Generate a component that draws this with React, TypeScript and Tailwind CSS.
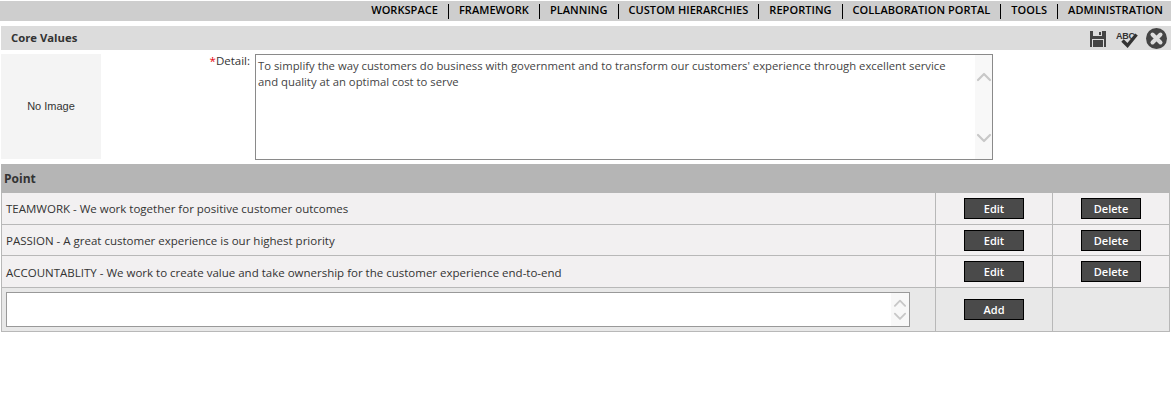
import React from 'react';
import { ChevronUp, ChevronDown } from 'lucide-react';

const font = "font-['Open_Sans','Liberation_Sans',sans-serif]";
const navItems = ['WORKSPACE', 'FRAMEWORK', 'PLANNING', 'CUSTOM HIERARCHIES', 'REPORTING', 'COLLABORATION PORTAL', 'TOOLS', 'ADMINISTRATION'];
const points = [
  { text: 'TEAMWORK - We work together for positive customer outcomes', h: 'h-[32px]', pt: '' },
  { text: 'PASSION - A great customer experience is our highest priority', h: 'h-[31px]', pt: 'pt-[2px]' },
  { text: 'ACCOUNTABLITY - We work to create value and take ownership for the customer experience end-to-end', h: 'h-[32px]', pt: 'pt-[2px]' },
];

const ActionButton = ({ label }: { label: string }) => (
  <button className="w-[60px] h-[21px] bg-[#4a4a4a] border border-black text-white text-[11px] font-semibold leading-none">
    {label}
  </button>
);

const Arrows = ({ gap, className }: { gap: string; className: string }) => (
  <div className={`flex flex-col items-center justify-center text-[#c8c8c8] ${className}`}>
    <ChevronUp size={24} strokeWidth={2.2} />
    <ChevronDown size={24} strokeWidth={2.2} className={gap} />
  </div>
);

export default function App() {
  return (
    <div className={`w-[1171px] h-[406px] bg-white pt-px text-[#333] overflow-hidden ${font}`}>
      <nav className="h-[20px] bg-[#cecece] flex items-center justify-end pr-[8px] text-black text-[11px] tracking-[0.05px] font-semibold">
        {navItems.map((item, i) => (
          <span key={item} className={`h-[15px] leading-[11px] px-[10px] last:pr-0 ${i > 0 ? 'border-l border-black' : ''}`}>
            {item}
          </span>
        ))}
      </nav>

      <div className="mt-[5px] ml-px h-[24px] bg-[#dcdcdc] flex items-center justify-between pl-[10px] pr-[4px]">
        <span className="text-[11.3px] font-bold text-[#333]">Core Values</span>
        <div className="flex items-center">
          <svg width="16" height="16" viewBox="0 0 16 16" className="mt-[2px]">
            <path d="M0 0h16v16H0z" fill="#444" />
            <path d="M3 0h9v5H3z" fill="#dcdcdc" />
            <path d="M9 1h2v3H9z" fill="#444" />
            <path d="M2 8h12v8H2z" fill="#dcdcdc" />
            <path d="M3 9h10v7H3z" fill="#444" />
          </svg>
          <svg width="22" height="17" viewBox="0 0 22 17" className="ml-[10px] mt-[2px]">
            <text x="0" y="7.5" fontSize="9" fontWeight="700" fill="#333" fontFamily="Liberation Sans" textLength="19">ABC</text>
            <path d="M6.5 9.5l5 5 9-11" fill="none" stroke="#333" strokeWidth="3.4" />
          </svg>
          <svg width="21" height="21" viewBox="0 0 21 21" className="ml-[8px]">
            <circle cx="10.5" cy="10.5" r="10.5" fill="#444" />
            <path d="M6.5 6.5l8 8M14.5 6.5l-8 8" stroke="#dcdcdc" strokeWidth="4" strokeLinecap="round" />
          </svg>
        </div>
      </div>

      <div className="mt-[4px] ml-px flex h-[105px]">
        <div className="w-[100px] bg-[#f4f4f4] flex items-center justify-center text-[11px] text-[#333] font-['Liberation_Sans',sans-serif]">
          No Image
        </div>
        <div className="w-[154px] text-right pr-[5px] text-[11.5px] leading-[14px]">
          <span className="text-red-600">*</span>Detail:
        </div>
        <div className="w-[738px] h-[106px] border border-[#8a8a8a] flex bg-white">
          <p className="flex-1 pl-[2px] pr-[12px] pt-[3px] text-[11.3px] leading-[16px] text-[#444]">
            To simplify the way customers do business with government and to transform our customers' experience through excellent service and quality at an optimal cost to serve
          </p>
          <Arrows gap="mt-[37px]" className="w-[17px] bg-[#f8f8f8]" />
        </div>
      </div>

      <div className="mt-[5px] mx-px border-b border-[#b8b8b8]">
        <div className="h-[29px] bg-[#b5b5b5] flex items-center pl-[3px] text-[12px] font-bold text-[#333]">Point</div>
        {points.map(p => (
          <div key={p.text} className={`${p.h} flex bg-[#f2f0f1] border-l border-r border-b border-[#b8b8b8] text-[11.5px] text-[#333]`}>
            <div className={`w-[933px] pl-[4px] flex items-center ${p.pt}`}>{p.text}</div>
            <div className="w-[117px] border-l border-[#b8b8b8] flex items-center justify-center"><ActionButton label="Edit" /></div>
            <div className="flex-1 border-l border-[#b8b8b8] flex items-center justify-center"><ActionButton label="Delete" /></div>
          </div>
        ))}
        <div className="h-[43px] flex bg-[#e8e8e8] border-l border-r border-[#b8b8b8]">
          <div className="w-[933px] pl-[4px] flex items-center">
            <div className="w-[904px] h-[35px] bg-white border border-[#999] flex justify-end">
              <Arrows gap="-mt-[8px]" className="w-[18px] bg-[#f8f8f8] overflow-hidden" />
            </div>
          </div>
          <div className="w-[117px] border-l border-[#b8b8b8] flex items-center justify-center"><ActionButton label="Add" /></div>
          <div className="flex-1 border-l border-[#b8b8b8]" />
        </div>
      </div>
    </div>
  );
}
